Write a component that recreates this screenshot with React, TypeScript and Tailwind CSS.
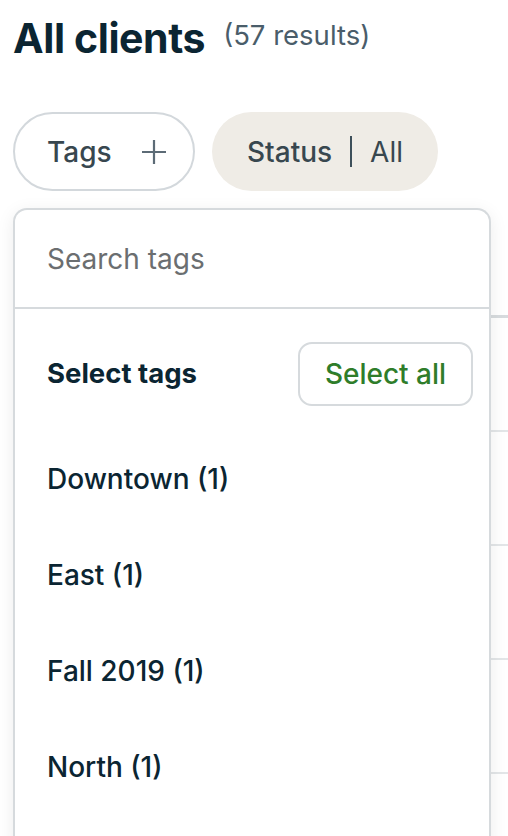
import React from "react";

const tags = ["Downtown (1)", "East (1)", "Fall 2019 (1)", "North (1)"];

export default function App() {
  return (
    <div
      className="relative h-[836px] w-[508px] overflow-hidden bg-white text-[#0b2532]"
      style={{ fontFamily: "Inter, 'Noto Sans', sans-serif" }}
    >
      <div className="pl-[13px]">
        <div className="flex h-[64px] items-center pt-[12px]">
          <h1 className="text-[41px] font-bold leading-[44px] tracking-[-0.4px]">All clients</h1>
          <span className="ml-[18px] mt-[-6px] text-[27.5px] leading-[40px] text-[#4a5d6a]">(57 results)</span>
        </div>

        <div className="mt-[48px] flex gap-[17px]">
          <div className="flex h-[79px] w-[182px] items-center rounded-full border-2 border-[#d3d8dc] pl-[32px] text-[#38474f]">
            <span className="text-[28px] font-medium leading-none">Tags</span>
            <svg className="ml-[29px]" width="26" height="26" viewBox="0 0 26 26" fill="none">
              <path d="M13 1v24M1 13h24" stroke="#5c6b76" strokeWidth="2.2" />
            </svg>
          </div>
          <div className="flex h-[79px] items-center rounded-full bg-[#efece6] pl-[35px] pr-[35px] text-[#38474f]">
            <span className="text-[28px] font-medium leading-none">Status</span>
            <span className="mx-[18px] h-[31px] w-[2px] bg-[#3d4f5a]" />
            <span className="text-[28px] leading-none">All</span>
          </div>
        </div>

        <div className="mt-[17px]">
          <div className="h-[110px] border-b-[3px] border-[#d7dbde]" />
          {[0, 1, 2, 3, 4].map((i) => (
            <div key={i} className="h-[114px] border-b-2 border-[#e3e6e8]" />
          ))}
        </div>
      </div>

      <div className="absolute left-[13px] top-[208px] h-[640px] w-[478px] rounded-t-[14px] border-2 border-b-0 border-[#d6dadd] bg-white shadow-[0_4px_18px_rgba(0,0,0,0.08)]">
        <div className="flex h-[99px] items-center border-b-2 border-[#d6dadd] pl-[32px]">
          <span className="text-[28px] leading-none text-[#6b6e70]">Search tags</span>
        </div>
        <div className="flex items-center justify-between pl-[32px] pr-[16px] pt-[33px]">
          <span className="text-[27.5px] font-bold leading-none">Select tags</span>
          <button className="flex h-[64px] w-[175px] items-center justify-center rounded-[14px] border-2 border-[#d6dadd] text-[28px] font-medium leading-none text-[#2f7d2a]">
            Select all
          </button>
        </div>
        <div className="mt-[25px]">
          {tags.map((t) => (
            <div key={t} className="flex h-[96px] items-center pl-[32px] text-[28px] font-medium leading-none">
              {t}
            </div>
          ))}
        </div>
      </div>
    </div>
  );
}
